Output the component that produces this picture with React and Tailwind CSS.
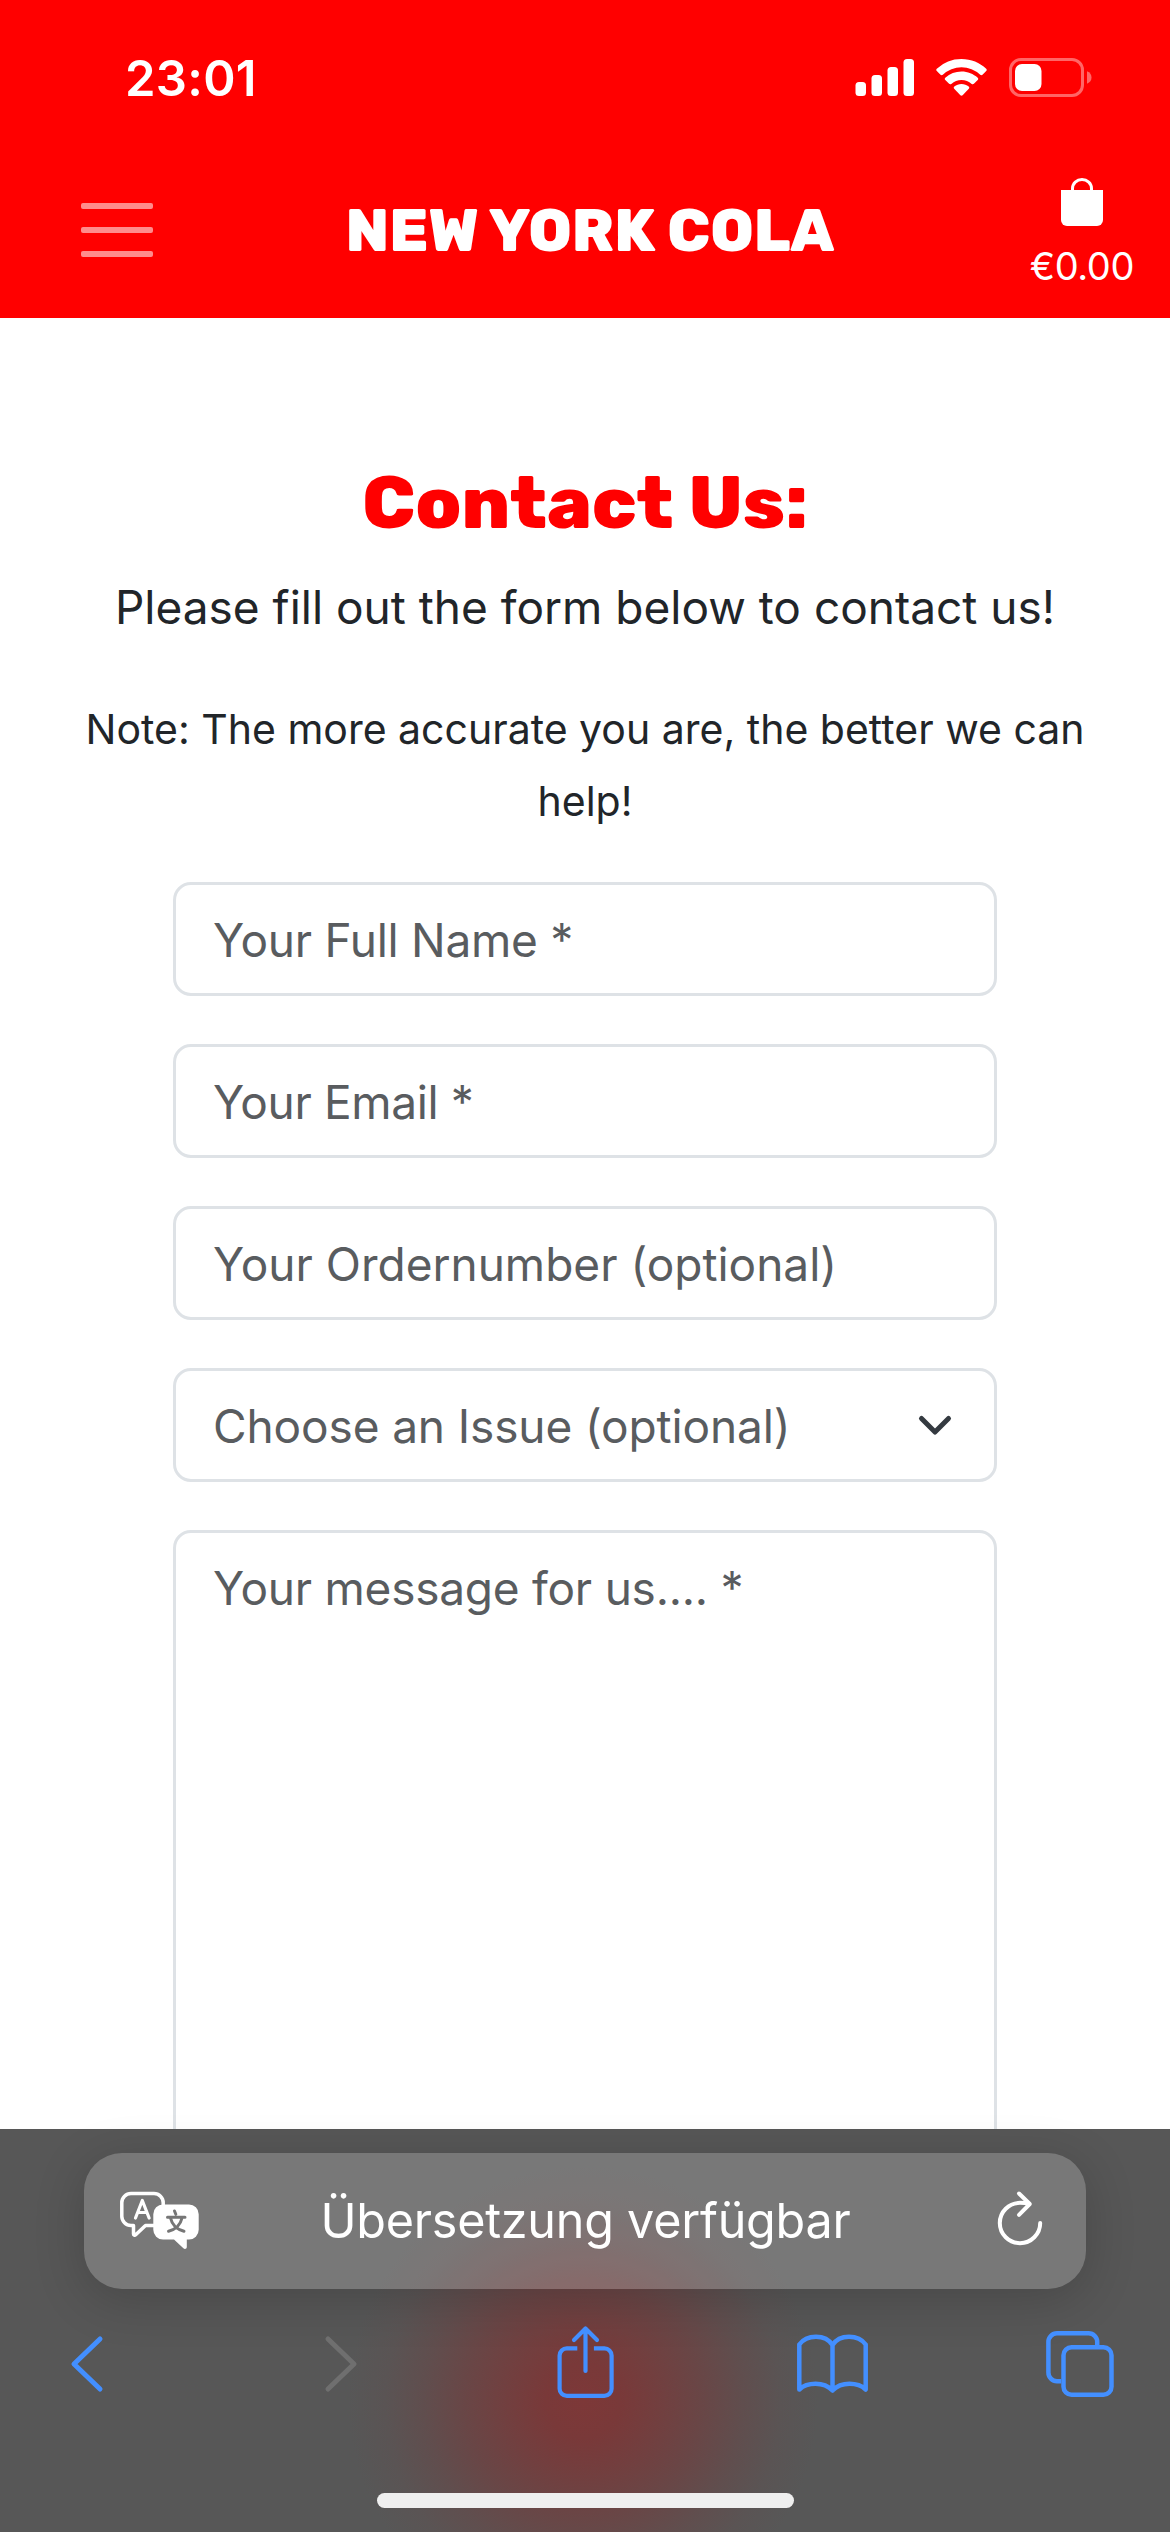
function StatusBar() {
  return (
    <div className="flex h-[156px] items-center justify-between pl-[125px] pr-[78px] text-white">
      <span className="text-[49px] font-semibold leading-none tracking-[0.3px]">23:01</span>
      <svg width="237" height="44" viewBox="855 56 237 44" fill="#fff">
        <rect x="855.5" y="82" width="10.5" height="14" rx="3.5" />
        <rect x="871.5" y="75" width="10.5" height="21" rx="3.5" />
        <rect x="887.5" y="67" width="10.5" height="29" rx="3.5" />
        <rect x="903.5" y="59" width="10.5" height="37" rx="3.5" />
        <path d="M961.500 59c9.600 0 18.300 3.700 24.700 9.700.7.700.7 1.700 0 2.400l-3.700 3.600c-.6.600-1.600.6-2.300 0a27.300 27.300 0 0 0-37.400 0c-.7.600-1.700.6-2.300 0l-3.700-3.600c-.7-.7-.7-1.700 0-2.400A36 36 0 0 1 961.500 59Z" />
        <path d="M961.500 71.500c6.200 0 11.900 2.400 16.200 6.200.7.700.7 1.700 0 2.400l-3.800 3.700c-.6.600-1.500.6-2.200.1a15.600 15.600 0 0 0-20.400 0c-.7.500-1.600.5-2.200-.1l-3.800-3.700c-.7-.7-.7-1.700 0-2.400a24.300 24.300 0 0 1 16.200-6.200Z" />
        <path d="M961.500 84c2.700 0 5.200 1 7.200 2.500.7.600.7 1.500.1 2.200l-6.200 6.600c-.6.600-1.600.6-2.200 0l-6.200-6.600c-.6-.7-.6-1.600.1-2.200 2-1.500 4.500-2.500 7.200-2.500Z" />
        <rect x="1010.500" y="59.500" width="72" height="36" rx="10.500" fill="none" stroke="#ff6666" strokeWidth="3" />
        <rect x="1015" y="64" width="26.500" height="27" rx="7" />
        <path d="M1087 71.300c3 1.200 4.500 3.500 4.500 6.200s-1.500 5-4.500 6.200Z" fill="#ff6666" />
      </svg>
    </div>
  );
}

function NavBar() {
  return (
    <div className="flex h-[148px] items-center justify-between pl-[81px] pr-[36px] text-white">
      <button className="flex w-[72px] flex-col gap-[18px]" aria-label="Menu">
        <span className="h-1.5 w-full rounded-[2px] bg-[#ff8c8c]" />
        <span className="h-1.5 w-full rounded-[2px] bg-[#ff8c8c]" />
        <span className="h-1.5 w-full rounded-[2px] bg-[#ff8c8c]" />
      </button>
      <span className="mr-[3px] pt-0.5 font-['Rubik','Inter',sans-serif] text-[60px] font-extrabold leading-[72px] tracking-[-0.1px] whitespace-nowrap">
        NEW YORK COLA
      </span>
      <a className="flex flex-col items-center pt-[6px]">
        <svg width="44" height="48" viewBox="0 0 44 48">
          <path d="M12.500 14V10.500a9.500 9 0 0 1 19 0V14" fill="none" stroke="#fff" strokeWidth="3" />
          <path d="M1 12h42v30a6 6 0 0 1-6 6H7a6 6 0 0 1-6-6Z" fill="#fff" />
        </svg>
        <span className="mt-[18px] text-[38px] leading-[44px] tracking-[-0.4px]">€0.00</span>
      </a>
    </div>
  );
}

function Field({ children, className = "" }) {
  return (
    <div
      className={`flex h-[114px] items-center justify-between rounded-[18px] border-[3px] border-[#dee2e6] pl-[37px] pr-[41px] pt-px text-[46px] leading-[72px] text-[#595c5f] ${className}`}
    >
      {children}
    </div>
  );
}

function ContactForm() {
  return (
    <form className="mx-auto mt-[45px] flex w-[824px] flex-col gap-12">
      <Field className="tracking-[-0.27px]">Your Full Name *</Field>
      <Field className="tracking-[-0.35px]">Your Email *</Field>
      <Field>Your Ordernumber (optional)</Field>
      <Field className="tracking-[-0.12px]">
        <span>Choose an Issue (optional)</span>
        <svg width="36" height="24" viewBox="0 0 36 24" fill="none">
          <path d="M4.500 4.500 18 18 31.500 4.500" stroke="#343a40" strokeWidth="5" strokeLinecap="round" strokeLinejoin="round" />
        </svg>
      </Field>
      <div className="h-[700px] rounded-[18px] border-[3px] border-[#dee2e6] pl-[37px] pt-[19px] text-[46px] leading-[72px] tracking-[-0.24px] text-[#595c5f]">
        Your message for us.... *
      </div>
    </form>
  );
}

function AddressBar() {
  return (
    <div className="flex h-[136px] w-[1002px] items-center justify-between rounded-[38px] bg-white/20 pl-[34px] pr-[41px] text-white shadow-[0_10px_50px_rgba(0,0,0,0.18)]">
      <svg width="84" height="64" viewBox="118 2190 84 64" fill="none">
        <path
          d="M154 2226.500h-8.500l-9.800 9.300c-1 .9-2.200.5-2.200-.9v-8.400H131a9.200 9.200 0 0 1-9.200-9.200v-13.600a9.200 9.200 0 0 1 9.200-9.200h23a9.200 9.200 0 0 1 9.200 9.200v2.500"
          stroke="#fff"
          strokeWidth="3.500"
          strokeLinejoin="round"
        />
        <path d="m135.500 2219 6.800-17.500 6.800 17.500M137.800 2213.500h9" stroke="#fff" strokeWidth="3.200" strokeLinecap="round" strokeLinejoin="round" />
        <path d="M163 2205.500h26a9.700 9.700 0 0 1 9.700 9.700v15.600a9.700 9.700 0 0 1-9.700 9.700h-2.200v7.500c0 1.900-2 2.600-3.400 1.300l-9.400-8.800H163a9.700 9.700 0 0 1-9.700-9.700v-15.600a9.700 9.700 0 0 1 9.700-9.700Z" fill="#fff" />
        <path d="m174.500 2212 1.300 3.200M167.500 2218.200h17.500M182 2219c-1.500 6.500-6.500 11.500-13.500 13.200M170.500 2219c1.500 6.500 6.500 11.500 13.500 13.200" stroke="#767676" strokeWidth="3" strokeLinecap="round" />
      </svg>
      <span className="mr-[28px] text-[48.5px] leading-[60px] tracking-[-0.25px]">Übersetzung verfügbar</span>
      <svg width="48" height="64" viewBox="997 2190 48 64" fill="none" stroke="#fff" strokeWidth="4" strokeLinecap="round" strokeLinejoin="round">
        <path d="M1040.200 2224a20.200 20.200 0 1 1-20.200-20.200c3.500 0 6.500.4 9 1.200" />
        <path d="m1019 2194.500 10.800 10.500-10.800 10.800" />
      </svg>
    </div>
  );
}

function Toolbar() {
  return (
    <div className="mt-[27px] flex h-[96px] w-full items-center pl-[66px] text-[#438fff]">
      <svg width="40" height="60" viewBox="0 0 40 60" fill="none" stroke="currentColor" strokeWidth="5" strokeLinecap="round" strokeLinejoin="round">
        <path d="M34 5 8 30l26 25" />
      </svg>
      <svg className="ml-[216px]" width="40" height="60" viewBox="0 0 40 60" fill="none" stroke="#6f6f6f" strokeWidth="5" strokeLinecap="round" strokeLinejoin="round">
        <path d="m6 5 26 25L6 55" />
      </svg>
      <svg className="ml-[193px]" width="60" height="80" viewBox="555 2324 60 80" fill="none" stroke="currentColor" strokeWidth="4.200" strokeLinecap="round" strokeLinejoin="round">
        <path d="M577.300 2348.300h-10.500a7.200 7.200 0 0 0-7.200 7.200v33.200a7.200 7.200 0 0 0 7.200 7.200h37.600a7.200 7.200 0 0 0 7.200-7.200v-33.200a7.200 7.200 0 0 0-7.200-7.200h-10.500" strokeLinecap="butt" />
        <path d="M585.500 2371v-42.500M574 2340l11.500-11.500L597 2340" />
      </svg>
      <svg className="ml-[180px]" width="76" height="68" viewBox="795 2330 76 68" fill="none" stroke="currentColor" strokeWidth="4.500" strokeLinecap="round" strokeLinejoin="round">
        <path d="M832.500 2345c-3.500-5.500-9.500-8.300-16.500-8.300s-13.200 2.800-16.700 7.800v45c4-3.800 9.500-5.700 16.200-5.700s13 2.500 17 6.700c4-4.200 10.300-6.700 17-6.700s12.200 1.900 16.200 5.700v-45c-3.500-5-9.700-7.800-16.700-7.800s-13 2.800-16.500 8.300Zm0 0v45.500" />
      </svg>
      <svg className="ml-[171px]" width="74" height="72" viewBox="1042 2328 74 72" fill="none" stroke="currentColor" strokeWidth="4.500">
        <path d="M1061 2381.200h-4a8.600 8.600 0 0 1-8.600-8.600v-30.700a8.600 8.600 0 0 1 8.600-8.600h31.600a8.600 8.600 0 0 1 8.600 8.600v4" />
        <rect x="1063.500" y="2347.300" width="48" height="47.500" rx="8" />
      </svg>
    </div>
  );
}

export default function App() {
  return (
    <div className="flex h-[2532px] w-[1170px] flex-col overflow-hidden bg-white font-['Inter',sans-serif]">
      <header className="h-[318px] shrink-0 bg-[#ff0000]">
        <StatusBar />
        <NavBar />
      </header>
      <main className="h-[1811px] shrink-0 overflow-hidden pt-[142px] text-center text-[#212529]">
        <h1 className="font-['Rubik','Inter',sans-serif] text-[74px] font-extrabold leading-[86px] text-[#ff0000]">Contact Us:</h1>
        <p className="mt-[25px] text-[46px] leading-[72px]">Please fill out the form below to contact us!</p>
        <p className="mx-auto mt-[50px] w-[1040px] text-[41px] leading-[72px]">
          Note: The more accurate you are, the better we can help!
        </p>
        <div className="text-left">
          <ContactForm />
        </div>
      </main>
      <footer className="flex h-[403px] shrink-0 flex-col items-center bg-[#575757] bg-[radial-gradient(235px_235px_at_583px_272px,#7d3838_0%,#793939_16%,#723f3f_32%,#694646_50%,#604e4e_68%,#5a5454_84%,#575757_100%)] pt-6">
        <AddressBar />
        <Toolbar />
        <div className="mt-[81px] h-[15px] w-[417px] shrink-0 rounded-full bg-[#efefef]" />
      </footer>
    </div>
  );
}
